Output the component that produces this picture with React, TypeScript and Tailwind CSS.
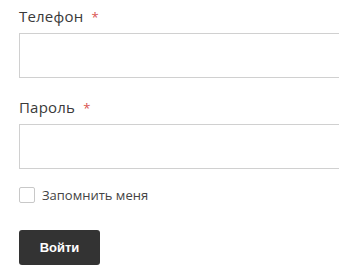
export default function App() {
  return (
    <div className="w-[339px] h-[271px] overflow-hidden bg-white pl-[19px] pt-[4px] font-['Open_Sans',sans-serif] text-[#3a3a3a]">
      <form className="flex flex-col w-[340px]">
        <label className="text-[15px] leading-[24px] tracking-[0.2px]">
          Телефон <span className="text-[#d9534f] ml-[4px] text-[13px]">*</span>
        </label>
        <input
          type="text"
          className="mt-[4px] h-[45px] border border-[#d0d0d0] bg-white outline-none"
        />
        <label className="mt-[17px] text-[15px] leading-[24px] tracking-[0.2px]">
          Пароль <span className="text-[#d9534f] ml-[4px] text-[13px]">*</span>
        </label>
        <input
          type="password"
          className="mt-[4px] h-[45px] border border-[#d0d0d0] bg-white outline-none"
        />
        <label className="mt-[18px] flex items-center gap-[7px] text-[13px] leading-[16px] text-[#444]">
          <span className="w-[16px] h-[16px] border border-[#c8c8c8] rounded-[2px] bg-white" />
          Запомнить меня
        </label>
        <button
          type="button"
          className="mt-[27px] w-[81px] h-[35px] rounded-[3px] bg-[#333] text-white text-[13px] font-bold font-['Liberation_Sans',sans-serif]"
        >
          Войти
        </button>
      </form>
    </div>
  );
}
